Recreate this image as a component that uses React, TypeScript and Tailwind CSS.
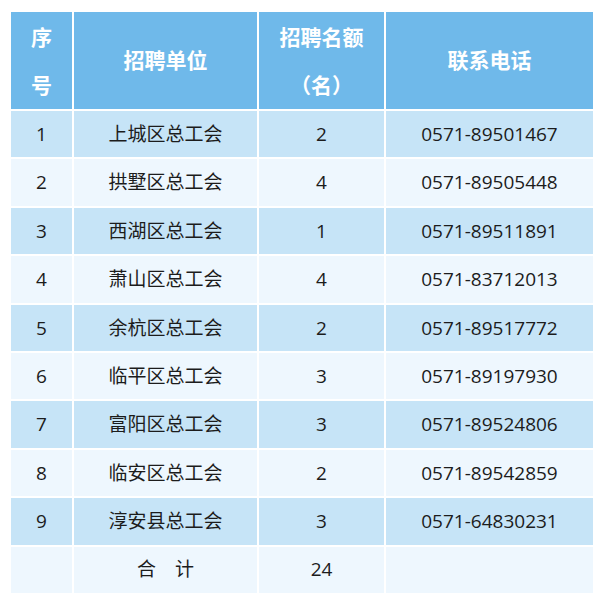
import React from "react";

const rows: [string, string, string, string][] = [
  ["1", "上城区总工会", "2", "0571-89501467"],
  ["2", "拱墅区总工会", "4", "0571-89505448"],
  ["3", "西湖区总工会", "1", "0571-89511891"],
  ["4", "萧山区总工会", "4", "0571-83712013"],
  ["5", "余杭区总工会", "2", "0571-89517772"],
  ["6", "临平区总工会", "3", "0571-89197930"],
  ["7", "富阳区总工会", "3", "0571-89524806"],
  ["8", "临安区总工会", "2", "0571-89542859"],
  ["9", "淳安县总工会", "3", "0571-64830231"],
  ["", "合　计", "24", ""],
];

export default function App() {
  return (
    <div
      className="w-[597px] h-[613px] bg-white pt-[12px] pl-[11px]"
      style={{ fontFamily: '"Open Sans", "Noto Sans CJK SC", sans-serif' }}
    >
      <div className="grid grid-cols-[61px_183px_125px_207px] auto-rows-[46.4px] grid-rows-[97px] gap-[2px] w-[582px]">
        <div className="bg-[#6fb9ea] text-white font-bold text-[21px] leading-[48px] flex flex-col items-center justify-center">
          <span>序</span>
          <span>号</span>
        </div>
        <div className="bg-[#6fb9ea] text-white font-bold text-[21px] flex items-center justify-center">
          招聘单位
        </div>
        <div className="bg-[#6fb9ea] text-white font-bold text-[21px] leading-[48px] flex flex-col items-center justify-center">
          <span>招聘名额</span>
          <span>（名）</span>
        </div>
        <div className="bg-[#6fb9ea] text-white font-bold text-[21px] flex items-center justify-center">
          联系电话
        </div>
        {rows.map((r, i) => {
          const bg = i % 2 === 0 ? "bg-[#c6e4f7]" : "bg-[#eef7fe]";
          return (
            <React.Fragment key={i}>
              {r.map((c, j) => (
                <div
                  key={j}
                  className={`${bg} text-[#1c1c1c] text-[19px] flex items-center justify-center`}
                >
                  {c}
                </div>
              ))}
            </React.Fragment>
          );
        })}
      </div>
    </div>
  );
}
